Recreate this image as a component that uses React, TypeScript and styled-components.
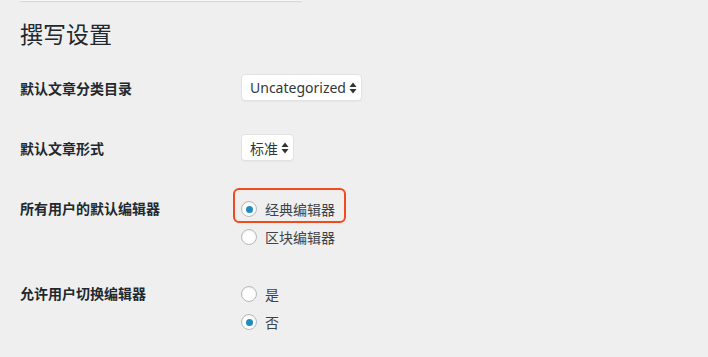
import styled, { createGlobalStyle } from "styled-components";

const GlobalStyle = createGlobalStyle`
  html, body {
    margin: 0;
    padding: 0;
    background: #efefef;
  }
  body {
    font-family: "Noto Sans", "Noto Sans CJK SC", sans-serif;
    color: #23282d;
  }
`;

const Page = styled.div`
  width: 708px;
  height: 357px;
  overflow: hidden;
  padding-left: 20px;
  box-sizing: border-box;
`;

const TopEdge = styled.div`
  width: 282px;
  height: 1px;
  background: #f6f6f6;
  box-shadow: 0 1px 1px rgba(0, 0, 0, 0.12);
`;

const Title = styled.h1`
  margin: 17px 0 0;
  font-size: 23px;
  line-height: 30px;
  font-weight: 400;
  color: #23282d;
  font-family: "Noto Sans CJK SC", sans-serif;
`;

const Table = styled.div`
  margin-top: 10px;
  display: flex;
  flex-direction: column;
`;

const Row = styled.div<{ $bottom?: number }>`
  display: grid;
  grid-template-columns: 221px 1fr;
  align-items: start;
  padding-bottom: ${(p) => p.$bottom ?? 0}px;
`;

const Label = styled.div`
  padding: 20px 0;
  font-size: 14px;
  line-height: 20px;
  font-weight: 600;
  color: #23282d;
  font-family: "Noto Sans CJK SC", sans-serif;
`;

const Field = styled.div<{ $top: number }>`
  padding-top: ${(p) => p.$top}px;
  display: flex;
  flex-direction: column;
  align-items: flex-start;
`;

const Select = styled.div`
  height: 27px;
  box-sizing: border-box;
  display: inline-flex;
  align-items: center;
  gap: 3px;
  padding: 0 4px 0 8px;
  background: #fff;
  border: 1px solid #e2e2e2;
  border-radius: 4px;
  box-shadow: 0 1px 1px rgba(0, 0, 0, 0.04);
  font-size: 14px;
  color: #32373c;
  font-family: "Noto Sans", "Noto Sans CJK SC", sans-serif;
`;

const Arrows = () => (
  <svg width="8" height="12" viewBox="0 0 8 12">
    <path d="M4 0.5 L7.5 5 H0.5 Z" fill="#333" />
    <path d="M4 11.5 L7.5 7 H0.5 Z" fill="#333" />
  </svg>
);

const Option = styled.label`
  position: relative;
  height: 28px;
  display: flex;
  align-items: center;
  gap: 8px;
  font-size: 14px;
  color: #3c434a;
  font-family: "Noto Sans CJK SC", sans-serif;
`;

const Highlight = styled.span`
  position: absolute;
  left: -8px;
  top: -7px;
  width: 113px;
  height: 35px;
  box-sizing: border-box;
  border: 2.5px solid #f24a1c;
  border-radius: 6px;
`;

const Radio = styled.span<{ $checked?: boolean }>`
  width: 16px;
  height: 16px;
  box-sizing: border-box;
  border-radius: 50%;
  border: 1px solid #b4b9be;
  background: #fff;
  box-shadow: inset 0 1px 2px rgba(0, 0, 0, 0.07);
  display: grid;
  place-items: center;

  &::after {
    content: "";
    width: 7px;
    height: 7px;
    border-radius: 50%;
    background: ${(p) => (p.$checked ? "#1e8cbe" : "transparent")};
  }
`;

export default function App() {
  return (
    <Page>
      <GlobalStyle />
      <TopEdge />
      <Title>撰写设置</Title>
      <Table>
        <Row>
          <Label>默认文章分类目录</Label>
          <Field $top={16}>
            <Select>
              Uncategorized
              <Arrows />
            </Select>
          </Field>
        </Row>
        <Row>
          <Label>默认文章形式</Label>
          <Field $top={16}>
            <Select>
              标准
              <Arrows />
            </Select>
          </Field>
        </Row>
        <Row $bottom={12}>
          <Label>所有用户的默认编辑器</Label>
          <Field $top={17}>
            <Option>
              <Highlight />
              <Radio $checked />
              经典编辑器
            </Option>
            <Option>
              <Radio />
              区块编辑器
            </Option>
          </Field>
        </Row>
        <Row>
          <Label>允许用户切换编辑器</Label>
          <Field $top={17}>
            <Option>
              <Radio />
              是
            </Option>
            <Option>
              <Radio $checked />
              否
            </Option>
          </Field>
        </Row>
      </Table>
    </Page>
  );
}
